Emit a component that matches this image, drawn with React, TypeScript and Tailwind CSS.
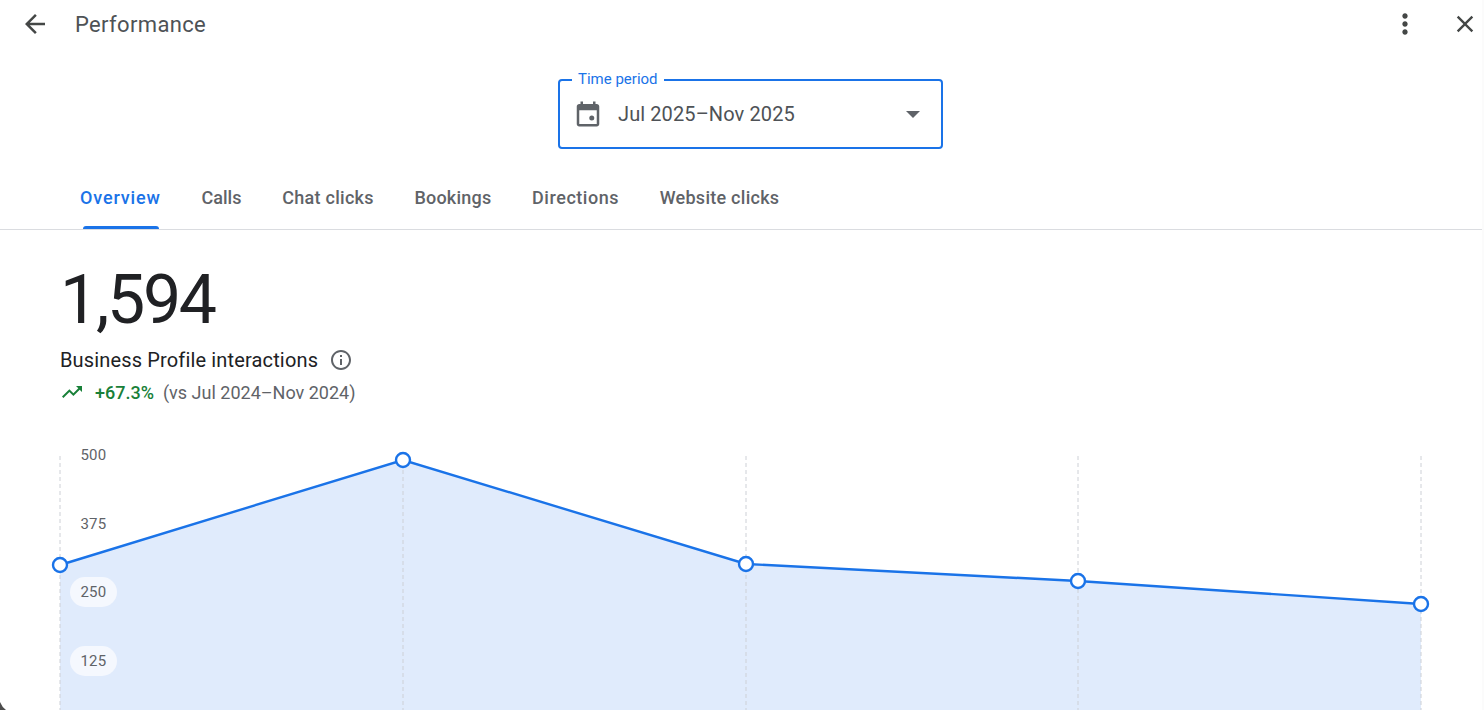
import React from "react";

const tabs = [
  { label: "Overview", cls: "tracking-[0.86px] text-[#1a73e8]" },
  { label: "Calls", cls: "tracking-[0.06px] text-[#5f6368]" },
  { label: "Chat clicks", cls: "tracking-[0.28px] text-[#5f6368]" },
  { label: "Bookings", cls: "tracking-[0.22px] text-[#5f6368]" },
  { label: "Directions", cls: "tracking-[0.55px] text-[#5f6368]" },
  { label: "Website clicks", cls: "tracking-[0.26px] text-[#5f6368]" },
];

function Chart() {
  const pts = [
    [60, 565],
    [403, 460],
    [746, 564],
    [1078, 581],
    [1421, 604],
  ];
  const top = 456;
  const line = pts.map(([x, y]) => `${x},${y - top}`).join(" ");
  return (
    <div className="relative h-[254px] w-full">
      <svg width="1482" height="254" className="block overflow-visible">
        <polygon points={`60,254 ${line} 1421,254`} fill="#e0ebfc" />
        {pts.map(([x]) => (
          <line key={x} x1={x} x2={x} y1="0" y2="254" stroke="#cdd0d6" strokeWidth="1" strokeDasharray="4 3" />
        ))}
        <polyline points={line} fill="none" stroke="#1a73e8" strokeWidth="2.4" />
        {pts.map(([x, y]) => (
          <circle key={x} cx={x} cy={y - top} r="7" fill="#fff" stroke="#1a73e8" strokeWidth="2.4" />
        ))}
      </svg>
      <div className="absolute left-[70px] top-[-17px] flex flex-col gap-[39px] text-[15px] tracking-[0.3px] text-[#5f6368]">
        <span className="flex h-[30px] w-[47px] items-center justify-center pt-[2px]">500</span>
        <span className="flex h-[30px] w-[47px] items-center justify-center pt-[2px]">375</span>
        <span className="flex h-[30px] w-[47px] items-center justify-center rounded-full bg-[#f5f8fe]">250</span>
        <span className="flex h-[30px] w-[47px] items-center justify-center rounded-full bg-[#f5f8fe]">125</span>
      </div>
    </div>
  );
}

export default function App() {
  return (
    <div className="relative flex h-[710px] w-[1484px] overflow-hidden bg-white font-['Roboto',sans-serif]">
      <main className="min-w-0 flex-1">
        <header className="flex h-[48px] items-center pl-[20px] pr-[3px] text-[#444746]">
          <svg width="30" height="30" viewBox="0 0 24 24" fill="currentColor" className="shrink-0">
            <path d="M20 11H7.83l5.59-5.59L12 4l-8 8 8 8 1.41-1.41L7.83 13H20v-2z" />
          </svg>
          <h1 className="ml-[25px] text-[22px] font-normal tracking-[0.35px] text-[#4e5256]">Performance</h1>
          <svg width="32" height="32" viewBox="0 0 24 24" fill="currentColor" className="ml-auto shrink-0">
            <path d="M12 8c1.1 0 2-.9 2-2s-.9-2-2-2-2 .9-2 2 .9 2 2 2zm0 2c-1.1 0-2 .9-2 2s.9 2 2 2 2-.9 2-2-.9-2-2-2zm0 6c-1.1 0-2 .9-2 2s.9 2 2 2 2-.9 2-2-.9-2-2-2z" />
          </svg>
          <svg width="28" height="28" viewBox="0 0 24 24" fill="currentColor" className="ml-[30px] shrink-0">
            <path d="M19 6.41 17.59 5 12 10.59 6.41 5 5 6.41 10.59 12 5 17.59 6.41 19 12 13.41 17.59 19 19 17.59 13.41 12z" />
          </svg>
        </header>

        <div className="mt-[31px] flex justify-center pl-[19px]">
          <div className="relative flex h-[70px] w-[385px] items-center rounded-[4px] border-2 border-[#1a73e8] pl-[13px] pr-[21px]">
            <span className="absolute left-[12px] top-[-10px] bg-white px-[6px] text-[15px] leading-[16px] text-[#1a73e8]">Time period</span>
            <svg width="30" height="30" viewBox="0 0 24 24" fill="#5f6368" className="shrink-0">
              <path d="M19 4h-1V2h-2v2H8V2H6v2H5c-1.1 0-2 .9-2 2v14c0 1.1.9 2 2 2h14c1.1 0 2-.9 2-2V6c0-1.1-.9-2-2-2zm0 16H5V9h14v11z" />
              <circle cx="15" cy="15.2" r="2" />
            </svg>
            <span className="ml-[15px] text-[20px] tracking-[0.1px] text-[#4e5256]">Jul 2025–Nov 2025</span>
            <svg width="14" height="7" viewBox="0 0 14 7" fill="#5f6368" className="ml-auto shrink-0">
              <path d="M0 0h14L7 7z" />
            </svg>
          </div>
        </div>

        <nav className="mt-[29px] flex h-[52px] items-stretch gap-[40.6px] border-b border-[#dadce0] pl-[80px]">
          {tabs.map((t, i) => (
            <div key={t.label} className={`relative flex items-start pt-[8px] text-[18px] font-medium leading-[24px] ${t.cls}`}>
              {t.label}
              {i === 0 && <span className="absolute bottom-0 left-[3px] right-[2px] h-[3px] rounded-t-[3px] bg-[#1a73e8]" />}
            </div>
          ))}
        </nav>

        <section className="pl-[60px]">
          <div className="mt-[30px] text-[68px] font-normal leading-[80px] tracking-[-2.3px] text-[#202124]">1,594</div>
          <div className="mt-[8px] flex h-[24px] items-center text-[20px] tracking-[0.15px] text-[#202124]">
            Business Profile interactions
            <svg width="24" height="24" viewBox="0 0 24 24" fill="#5f6368" className="ml-[11px] shrink-0">
              <path d="M11 7h2v2h-2zm0 4h2v6h-2zm1-9C6.48 2 2 6.48 2 12s4.48 10 10 10 10-4.48 10-10S17.52 2 12 2zm0 18c-4.41 0-8-3.59-8-8s3.59-8 8-8 8 3.59 8 8-3.59 8-8 8z" />
            </svg>
          </div>
          <div className="mt-[8px] flex h-[24px] items-center text-[18px]">
            <svg width="24" height="24" viewBox="0 0 24 24" fill="#188038" className="shrink-0">
              <path d="m16 6 2.29 2.29-4.88 4.88-4-4L2 16.59 3.41 18l6-6 4 4 6.3-6.29L22 12V6z" />
            </svg>
            <span className="ml-[11px] font-medium text-[#188038]">+67.3%</span>
            <span className="ml-[9px] text-[#5f6368]">(vs Jul 2024–Nov 2024)</span>
          </div>
        </section>

        <div className="mt-[52px]">
          <Chart />
        </div>
      </main>
      <aside className="w-[2px] shrink-0 bg-[#fbfbfb]" />
      <svg width="8" height="8" viewBox="0 0 8 8" className="absolute bottom-0 left-0">
        <path d="M0 0Q2 5 6 8H0z" fill="#4d4d4d" />
      </svg>
    </div>
  );
}
